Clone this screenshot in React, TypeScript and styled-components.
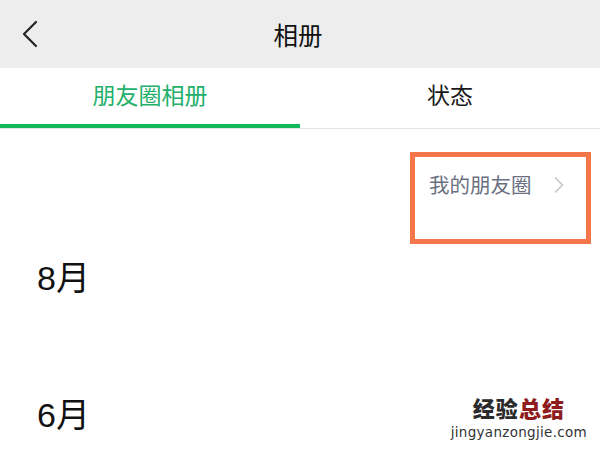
import React from 'react';
import styled, { createGlobalStyle } from 'styled-components';

const GlobalStyle = createGlobalStyle`
  html, body {
    margin: 0;
    padding: 0;
    background: #ffffff;
  }
  body {
    font-family: "Liberation Sans", "Noto Sans CJK SC", sans-serif;
  }
`;

const Screen = styled.div`
  position: relative;
  width: 600px;
  height: 450px;
  overflow: hidden;
  background: #ffffff;
`;

const NavBar = styled.header`
  display: grid;
  grid-template-columns: 80px 1fr 80px;
  align-items: center;
  height: 68px;
  background: #ededed;
`;

const BackButton = styled.button`
  display: flex;
  align-items: center;
  justify-content: flex-start;
  padding: 0 0 0 21px;
  height: 100%;
  border: none;
  background: transparent;
`;

const Title = styled.h1`
  margin: 0;
  padding-right: 4px;
  text-align: center;
  font-family: "Noto Sans CJK SC", sans-serif;
  font-size: 24.5px;
  font-weight: 400;
  color: #111111;
`;

const TabBar = styled.nav`
  display: flex;
  height: 60px;
  border-bottom: 1px solid #e2e2e2;
`;

const Tab = styled.div<{ $active?: boolean }>`
  flex: 1;
  display: flex;
  align-items: center;
  justify-content: center;
  padding-bottom: 4px;
  font-family: "Noto Sans CJK SC", sans-serif;
  font-size: 23px;
  color: ${(p) => (p.$active ? '#22b06a' : '#1a1a1a')};
  border-bottom: 4px solid ${(p) => (p.$active ? '#14b85c' : 'transparent')};
`;

const Content = styled.main`
  display: flex;
  flex-direction: column;
`;

const MomentsRow = styled.div`
  display: flex;
  justify-content: flex-end;
  padding: 23px 9px 0 0;
`;

const MomentsBox = styled.div`
  display: flex;
  align-items: flex-start;
  justify-content: space-between;
  box-sizing: border-box;
  width: 181px;
  height: 92px;
  padding: 16px 22px 0 14px;
  border: 5px solid #f5764a;
`;

const MomentsLabel = styled.span`
  font-family: "Noto Sans CJK SC", sans-serif;
  font-size: 20.5px;
  line-height: 22px;
  color: #6b7082;
`;

const Chevron = styled.span`
  display: flex;
  padding-top: 4px;
`;

const MonthList = styled.div`
  display: flex;
  flex-direction: column;
  gap: 103px;
  padding: 17px 0 0 37px;
`;

const Month = styled.div`
  font-family: "Liberation Sans", "Noto Sans CJK SC", sans-serif;
  font-size: 34px;
  line-height: 34px;
  color: #111111;
`;

const Watermark = styled.div`
  position: absolute;
  right: 13px;
  bottom: 10px;
  display: flex;
  flex-direction: column;
  align-items: center;
  pointer-events: none;
`;

const MarkTitle = styled.div`
  font-family: "Noto Sans CJK SC", sans-serif;
  font-size: 22px;
  line-height: 24px;
  font-weight: 900;
  color: #2b2b2b;
  letter-spacing: 1px;
`;

const MarkRed = styled.span`
  color: #8e1c1c;
`;

const MarkUrl = styled.div`
  margin-top: 5px;
  font-family: "DejaVu Sans", sans-serif;
  font-size: 13.5px;
  line-height: 16px;
  color: #333333;
  letter-spacing: 0.3px;
`;

export default function App() {
  return (
    <>
      <GlobalStyle />
      <Screen>
        <NavBar>
          <BackButton aria-label="返回">
            <svg width="18" height="28" viewBox="0 0 18 28" fill="none">
              <path d="M15 2 L3 14 L15 26" stroke="#222" strokeWidth="2.2" strokeLinecap="round" strokeLinejoin="round" />
            </svg>
          </BackButton>
          <Title>相册</Title>
          <div />
        </NavBar>

        <TabBar>
          <Tab $active>朋友圈相册</Tab>
          <Tab>状态</Tab>
        </TabBar>

        <Content>
          <MomentsRow>
            <MomentsBox>
              <MomentsLabel>我的朋友圈</MomentsLabel>
              <Chevron>
                <svg width="10" height="16" viewBox="0 0 10 16" fill="none">
                  <path d="M1.5 1 L8.5 8 L1.5 15" stroke="#c4c4c4" strokeWidth="1.5" strokeLinecap="round" strokeLinejoin="round" />
                </svg>
              </Chevron>
            </MomentsBox>
          </MomentsRow>

          <MonthList>
            <Month>8月</Month>
            <Month>6月</Month>
          </MonthList>
        </Content>

        <Watermark>
          <MarkTitle>
            经验<MarkRed>总结</MarkRed>
          </MarkTitle>
          <MarkUrl>jingyanzongjie.com</MarkUrl>
        </Watermark>
      </Screen>
    </>
  );
}
